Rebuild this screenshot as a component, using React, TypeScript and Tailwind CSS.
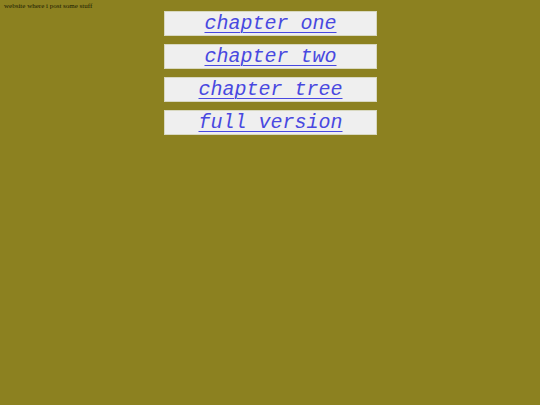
import React from 'react'

const chapters = ['chapter one', 'chapter two', 'chapter tree', 'full version']

export default function App() {
  return (
    <div className="min-h-[405px] w-full bg-[#8c8120]">
      <p className="px-1 pt-[3px] text-[7px] leading-[7px] text-[#1a1a00] [font-family:'Liberation_Serif',serif]">
        website where i post some stuff
      </p>
      <div className="mt-[1px] flex flex-col items-center gap-[8px]">
        {chapters.map((c) => (
          <div
            key={c}
            className="flex h-[25px] w-[213px] items-center justify-center border border-[#d8d8c0] bg-[#efefef] pl-px"
          >
            <a
              href="#"
              className="text-[20px] italic leading-none text-[#4848e0] underline decoration-1 underline-offset-[3px] [font-family:'Liberation_Mono',monospace]"
            >
              {c}
            </a>
          </div>
        ))}
      </div>
    </div>
  )
}
